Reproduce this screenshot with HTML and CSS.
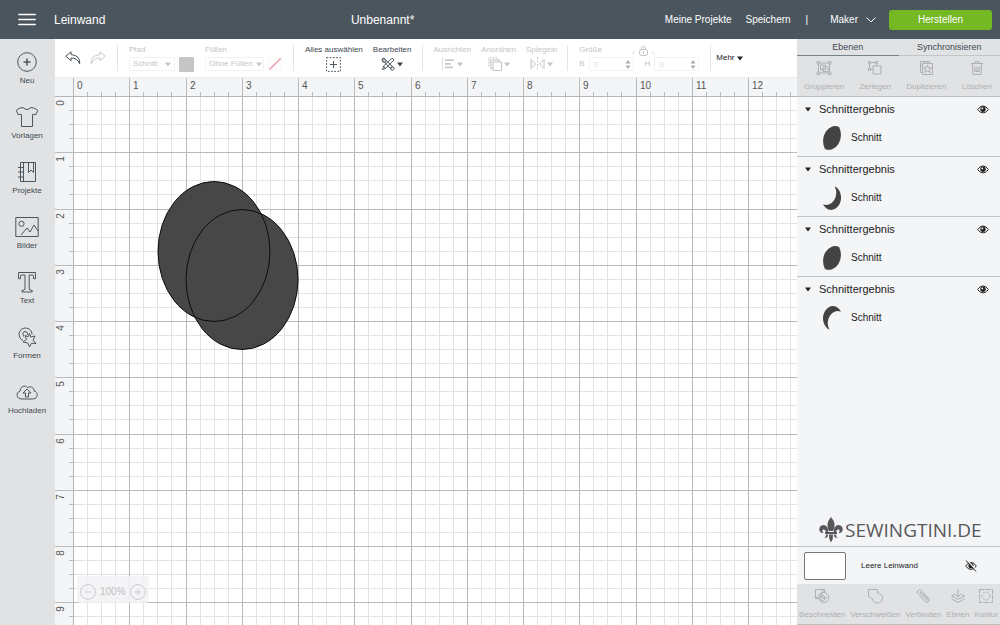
FILE: index.html
```html
<!DOCTYPE html>
<html lang="de">
<head>
<meta charset="utf-8">
<meta name="viewport" content="width=device-width, initial-scale=1">
<title>Leinwand</title>
<link rel="stylesheet" href="styles.css">
</head>
<body>
<svg class="defs" aria-hidden="true">
  <defs>
    <symbol id="eye" viewBox="0 0 12 9"><path d="M.6 4.500Q6-2.600 11.400 4.500Q6 11.400.6 4.500Z" fill="#fff" stroke="#222" stroke-width="1"/><circle cx="6" cy="4.200" r="2.700" fill="#222"/><circle cx="5.300" cy="3.400" r=".9" fill="#fff"/></symbol>
    <symbol id="caret" viewBox="0 0 6 5"><path d="M0 .5h6L3 4.500z" fill="currentColor"/></symbol>
    <symbol id="spin" viewBox="0 0 6 11"><path d="M.5 4.500h5L3 1zM.5 6.500h5L3 10z" fill="#aaa"/></symbol>
  </defs>
</svg>

<header class="header">
  <button class="burger" aria-label="Menü"><svg width="18" height="13" viewBox="0 0 18 13" stroke="#fff" stroke-width="1.500" stroke-linecap="round"><path d="M.8 1.500h16.400M.8 6.500h16.400M.8 11.500h16.400"/></svg></button>
  <span class="header-page">Leinwand</span>
  <h1 class="header-title">Unbenannt*</h1>
  <nav class="header-nav">
    <a class="nav-link" href="#">Meine Projekte</a>
    <a class="nav-link" href="#">Speichern</a>
    <span class="nav-divider">|</span>
    <button class="machine">Maker <svg width="10" height="6" viewBox="0 0 10 6" fill="none" stroke="#fff"><path d="M.5.5 5 5 9.500.5"/></svg></button>
    <button class="make">Herstellen</button>
  </nav>
</header>

<div class="workspace">
  <nav class="sidebar">
    <button class="side-item"><svg viewBox="0 0 24 24"><circle cx="12" cy="12" r="9.300"/><path d="M12 8.500v7M8.500 12h7" stroke-width="1.500"/></svg>Neu</button>
    <button class="side-item"><svg viewBox="0 0 24 24"><path d="M8 2.500Q12 6.500 16 2.500Q20.500 2.800 22.800 5.500L20.500 10Q18.800 8.700 17.500 9.500V21.500H6.500V9.500Q5.200 8.700 3.500 10L1.200 5.500Q3.500 2.800 8 2.500Z"/></svg>Vorlagen</button>
    <button class="side-item"><svg viewBox="0 0 24 24"><path d="M5.500 2.500h15v19h-15zM8.500 2.500v19M3 7.500h5M3 12h5M3 17h5M13.500 2.500v10l2.500-2.500 2.500 2.500v-10"/></svg>Projekte</button>
    <button class="side-item"><svg viewBox="0 0 24 24"><path d="M.8 2.500h22.400v19H.8zM6 20l6-7 3 4 4-7 4 6"/><circle cx="6.500" cy="8.800" r="2.600"/></svg>Bilder</button>
    <button class="side-item"><svg viewBox="0 0 24 24"><path d="M3.500 2.500h17v6.200h-2V5.800q0-.8-1-.8h-3.300v14q0 1.300 3 1.500v1.500H7v-1.500q3-.2 3-1.500V5H6.500q-1 0-1 .8v2.900h-2z"/></svg>Text</button>
    <button class="side-item"><svg viewBox="0 0 24 24"><path d="M8 15.500C2.500 13.500 2.500 3.500 10 3c4.500 0 7 3 7 6.500"/><path d="M8.500 11.500Q7 6.500 10 6.500Q13 6.800 13 10"/><path d="M14.500 8.500l1.200 3.500 4.300-1-2 4 3 3.500-4.500-.3-2 3.800-1.700-4-4.800-1 3.500-2.500-1.500-4 3.200 1.200z"/></svg>Formen</button>
    <button class="side-item"><svg viewBox="0 0 24 24"><path d="M7 19C1 19 .5 12.500 5.200 11C5 6.500 10 4.500 12.500 7.500C16.500 5.500 19.500 8.500 19 11C23.500 11.500 23.500 19 17.500 19Z"/><path d="M10.500 17v-4h-2.500L12 9l4 4h-2.500v4z"/></svg>Hochladen</button>
  </nav>

  <main class="editor">
    <div class="toolbar">
      <div class="history">
        <button aria-label="Rückgängig"><svg width="16" height="14" viewBox="0 0 16 14" fill="none" stroke="#444e56"><path d="M6 .8.8 5.200 6 9.700V7q6-.5 8.700 5.800Q15.500 4.500 6 3.500Z"/></svg></button>
        <button aria-label="Wiederherstellen"><svg width="16" height="14" viewBox="0 0 16 14" fill="none" stroke="#c5c7c9"><path d="M10 .8 15.200 5.200 10 9.700V7Q4 6.500 1.300 12.800.500 4.500 10 3.500Z"/></svg></button>
      </div>
      <div class="tool off">
        <label for="path">Pfad</label>
        <div class="row"><span class="pick path-pick"><select id="path"><option>Schnitt</option></select><svg class="caret"><use href="#caret"/></svg></span><button class="swatch" aria-label="Farbe"></button></div>
      </div>
      <div class="tool off plain">
        <label for="fill">Füllen</label>
        <div class="row"><span class="pick fill-pick"><select id="fill"><option>Ohne Füllen</option></select><svg class="caret"><use href="#caret"/></svg></span><button class="nofill" aria-label="Keine Füllfarbe"><svg viewBox="0 0 12 12"><path d="M.5 11.500 11.500.5" stroke="#eeabb5" stroke-width="1.800"/></svg></button></div>
      </div>
      <button class="tool center">
        <span>Alles auswählen</span>
        <span class="row"><svg width="15" height="15" viewBox="0 0 15 15" fill="none" stroke="#4b555d"><rect x=".6" y=".6" width="13.800" height="13.800" stroke-dasharray="1.700 1.500"/><path d="M7.500 4v7M4 7.500h7"/></svg></span>
      </button>
      <button class="tool center plain">
        <span>Bearbeiten</span>
        <span class="row tight"><svg width="14" height="14" viewBox="0 0 14 14" fill="none" stroke="#3d474f" stroke-width=".9"><path d="M1 2.500 2.500 1l9 8.500q-.5 1.500-2 2zM1.500 12.500l1-3.500 8-7.500q2-.5 2.500 1.500L4.500 11.500zM2.500 9l2 2.500"/><circle cx="11.300" cy="11.500" r="1.700"/><circle cx="3" cy="3.500" r="1.800"/></svg><svg class="caret"><use href="#caret"/></svg></span>
      </button>
      <button class="tool center off">
        <span>Ausrichten</span>
        <span class="row tight"><svg width="14" height="14" viewBox="0 0 14 14" fill="none" stroke="#c7c9cb"><path d="M1.500 1v12" stroke-dasharray="1.500 1"/><path d="M4 3.200h9M4 6.800h6M4 10.400h8" stroke-width="1.800"/></svg><svg class="caret"><use href="#caret"/></svg></span>
      </button>
      <button class="tool center off plain">
        <span>Anordnen</span>
        <span class="row tight"><svg width="14" height="14" viewBox="0 0 14 14" fill="none" stroke="#c0c2c4"><path d="M1 9.500V.8h8.500v2" stroke-dasharray="2 1"/><path d="M5 11.500H2.800V3h8.500v2"/><path d="M5 5h8.500v8.500H5z"/></svg><svg class="caret"><use href="#caret"/></svg></span>
      </button>
      <button class="tool center off plain">
        <span>Spiegeln</span>
        <span class="row tight"><svg width="15" height="14" viewBox="0 0 15 14" fill="none" stroke="#c0c2c4"><path d="M1 2.500 5.500 7 1 11.500zM14 2.500 9.500 7 14 11.500z"/><path d="M7.500 0v14" stroke-dasharray="2 1.500"/></svg><svg class="caret"><use href="#caret"/></svg></span>
      </button>
      <div class="tool off size">
        <span class="size-head">Größe <svg width="23" height="12" viewBox="0 0 23 12" fill="none" stroke="#c0c2c4"><path d="M1 11V8h3M22 11V8h-3" stroke="#e8e8e8"/><rect x="7.500" y="5.500" width="8" height="6" rx="2"/><path d="M9.500 5.500V4q2-4 4 0v1.500M11.500 7v3"/></svg></span>
        <div class="row">
          <label for="w">B</label><span class="num"><input id="w" type="number" value="0"><svg width="6" height="11"><use href="#spin"/></svg></span>
          <label for="h" class="h-label">H</label><span class="num"><input id="h" type="number" value="0"><svg width="6" height="11"><use href="#spin"/></svg></span>
        </div>
      </div>
      <button class="more">Mehr <svg class="caret"><use href="#caret"/></svg></button>
    </div>

    <div class="canvas">
      <svg class="board" width="100%" height="100%">
        <defs>
          <pattern id="grid" x="18" y="18" width="225" height="225" patternUnits="userSpaceOnUse">
            <path class="minor" d="M14.500 0V225M28.500 0V225M42.500 0V225M70.500 0V225M84.500 0V225M98.500 0V225M127.500 0V225M141.500 0V225M155.500 0V225M183.500 0V225M197.500 0V225M211.500 0V225M0 14.500H225M0 28.500H225M0 42.500H225M0 70.500H225M0 84.500H225M0 98.500H225M0 127.500H225M0 141.500H225M0 155.500H225M0 183.500H225M0 197.500H225M0 211.500H225"/>
            <path class="major" d="M.5 0V225M56.500 0V225M113.500 0V225M169.500 0V225M0 .5H225M0 56.500H225M0 113.500H225M0 169.500H225"/>
          </pattern>
          <pattern id="ruler-x" x="18" y="0" width="225" height="18" patternUnits="userSpaceOnUse">
            <path class="major" d="M.5 0V18M56.500 0V18M113.500 0V18M169.500 0V18M14.500 14V18M28.500 14V18M42.500 14V18M70.500 14V18M84.500 14V18M98.500 14V18M127.500 14V18M141.500 14V18M155.500 14V18M183.500 14V18M197.500 14V18M211.500 14V18"/>
          </pattern>
          <pattern id="ruler-y" x="0" y="18" width="18" height="225" patternUnits="userSpaceOnUse">
            <path class="major" d="M0 .5H18M0 56.500H18M0 113.500H18M0 169.500H18M14 14.500H18M14 28.500H18M14 42.500H18M14 70.500H18M14 84.500H18M14 98.500H18M14 127.500H18M14 141.500H18M14 155.500H18M14 183.500H18M14 197.500H18M14 211.500H18"/>
          </pattern>
        </defs>
        <rect width="100%" height="100%" fill="#fff"/>
        <rect x="18" y="18" width="100%" height="100%" fill="url(#grid)"/>
        <rect width="100%" height="18" fill="#f4f5f7"/>
        <rect width="18" height="100%" fill="#f4f5f7"/>
        <rect x="18" width="100%" height="18" fill="url(#ruler-x)"/>
        <rect y="18" width="18" height="100%" fill="url(#ruler-y)"/>
        <rect y="18" width="100%" height="1" fill="#b4b5b7"/>
        <rect x="18" width="1" height="100%" fill="#b4b5b7"/>
        <g class="ruler-text">
          <text x="22" y="11">0</text><text x="78" y="11">1</text><text x="135" y="11">2</text><text x="191" y="11">3</text><text x="247" y="11">4</text><text x="303" y="11">5</text><text x="360" y="11">6</text><text x="416" y="11">7</text><text x="472" y="11">8</text><text x="528" y="11">9</text><text x="585" y="11">10</text><text x="641" y="11">11</text><text x="697" y="11">12</text>
        </g>
        <g class="ruler-text upright" transform="rotate(-90)">
          <text x="-25" y="9">0</text><text x="-81" y="9">1</text><text x="-138" y="9">2</text><text x="-194" y="9">3</text><text x="-250" y="9">4</text><text x="-306" y="9">5</text><text x="-363" y="9">6</text><text x="-419" y="9">7</text><text x="-475" y="9">8</text><text x="-531" y="9">9</text>
        </g>
        <g fill="#474747">
          <ellipse cx="159" cy="173.500" rx="56" ry="70"/>
          <ellipse cx="187" cy="201.500" rx="56" ry="70"/>
        </g>
        <g fill="none" stroke="#0c0c0c">
          <ellipse cx="159" cy="173.500" rx="56" ry="70"/>
          <ellipse cx="187" cy="201.500" rx="56" ry="70"/>
        </g>
      </svg>
      <div class="zoom">
        <button aria-label="Verkleinern"><svg width="16" height="16" viewBox="0 0 16 16" fill="none" stroke="#c9cacc"><circle cx="8" cy="8" r="7.400"/><path d="M5 8h6"/></svg></button>
        <span>100%</span>
        <button aria-label="Vergrößern"><svg width="16" height="16" viewBox="0 0 16 16" fill="none" stroke="#c9cacc"><circle cx="8" cy="8" r="7.400"/><path d="M5 8h6M8 5v6"/></svg></button>
      </div>
    </div>
  </main>

  <aside class="panel">
    <div class="tabs" role="tablist">
      <button class="tab active" role="tab" aria-selected="true">Ebenen</button>
      <button class="tab" role="tab" aria-selected="false">Synchronisieren</button>
    </div>
    <div class="actions top">
      <button><svg viewBox="0 0 16 16"><path d="M2.500 3h11v10h-11zM4.500 5h5v4.500h-5zM7 7h5v4.500H7z"/><path d="M1 1.500h2.500V4H1zM12.500 1.500H15V4h-2.500zM1 12h2.500v2.500H1zM12.500 12H15v2.500h-2.500z" fill="#e1e2e4"/></svg>Gruppieren</button>
      <button><svg viewBox="0 0 16 16"><path d="M2.500 2.500h7v7h-7z"/><path d="M6 6h8v8H6z" fill="#e1e2e4"/><path d="M1.500 1.500h2v2h-2zM8.500 1.500h2v2h-2zM1.500 8.500h2v2h-2z" fill="#e1e2e4"/></svg>Zerlegen</button>
      <button><svg viewBox="0 0 16 16"><path d="M4.500 12.500h-2v-11h9v2M4.500 3.500h10v11h-10zM9.500 5l1 2.800h3L11.200 9.500l1 3-2.700-1.700-2.700 1.700 1-3L5.500 7.800h3zM2 4l2 2M5 1.500l2 2M8 1.500l2 2"/></svg>Duplizieren</button>
      <button><svg viewBox="0 0 16 16"><path d="M2 3.500h12M6 3.500v-2h4v2M3.500 3.500l.5 11h8l.5-11M5.800 6.500v5h4.400v-5M8 6.500v5"/></svg>Löschen</button>
    </div>
    <ul class="layers">
      <li class="layer">
        <div class="layer-head"><button class="fold" aria-label="Einklappen"><svg class="caret"><use href="#caret"/></svg></button><span>Schnittergebnis</span><button class="see" aria-label="Sichtbar"><svg width="12" height="9"><use href="#eye"/></svg></button></div>
        <div class="layer-body"><svg width="18" height="24" viewBox="186 209 84 113" fill="#434343"><path d="M261.300 213.800A56 70 0 0 0 194.700 317A56 70 0 0 0 261.300 213.800Z"/></svg><span>Schnitt</span></div>
      </li>
      <li class="layer">
        <div class="layer-head"><button class="fold" aria-label="Einklappen"><svg class="caret"><use href="#caret"/></svg></button><span>Schnittergebnis</span><button class="see" aria-label="Sichtbar"><svg width="12" height="9"><use href="#eye"/></svg></button></div>
        <div class="layer-body"><svg width="18" height="24" viewBox="195 213 103 137" fill="#434343"><path d="M261.300 213.800A56 70 0 1 1 194.700 317A56 70 0 0 0 261.300 213.800Z"/></svg><span>Schnitt</span></div>
      </li>
      <li class="layer">
        <div class="layer-head"><button class="fold" aria-label="Einklappen"><svg class="caret"><use href="#caret"/></svg></button><span>Schnittergebnis</span><button class="see" aria-label="Sichtbar"><svg width="12" height="9"><use href="#eye"/></svg></button></div>
        <div class="layer-body"><svg width="18" height="24" viewBox="186 209 84 113" fill="#434343"><path d="M261.300 213.800A56 70 0 0 0 194.700 317A56 70 0 0 0 261.300 213.800Z"/></svg><span>Schnitt</span></div>
      </li>
      <li class="layer">
        <div class="layer-head"><button class="fold" aria-label="Einklappen"><svg class="caret"><use href="#caret"/></svg></button><span>Schnittergebnis</span><button class="see" aria-label="Sichtbar"><svg width="12" height="9"><use href="#eye"/></svg></button></div>
        <div class="layer-body"><svg width="18" height="24" viewBox="158 181 103 137" fill="#434343"><path d="M194.700 317A56 70 0 1 1 261.300 213.800A56 70 0 0 0 194.700 317Z"/></svg><span>Schnitt</span></div>
      </li>
    </ul>
    <div class="brand">
      <svg width="24" height="26" viewBox="0 0 24 26" fill="#58585a"><path d="M12 0Q18 7 14 14H10Q6 7 12 0Z"/><path d="M9.500 15.500Q9 8 4.500 8Q0 8.500.3 13Q1 16.500 4.500 16Q2.500 14 4 12.500Q6.500 12 7 15.500ZM14.500 15.500Q15 8 19.500 8Q24 8.500 23.700 13Q23 16.500 19.500 16Q21.500 14 20 12.500Q17.500 12 17 15.500Z"/><path d="M6 15h12v2H6zM10 17.500h4Q14.500 22 12 25.500Q9.500 22 10 17.500ZM9 17.500Q9 21.500 5.500 20.500Q7.500 19.500 7 17.500ZM15 17.500Q15 21.500 18.500 20.500Q16.500 19.500 17 17.500Z"/></svg>
      <span>SEWINGTINI.DE</span>
    </div>
    <div class="blank">
      <button class="blank-swatch" aria-label="Leinwandfarbe"></button>
      <span>Leere Leinwand</span>
      <button class="see" aria-label="Ausgeblendet"><svg width="12" height="12" viewBox="0 0 12 12"><g transform="translate(0 1.500)"><path d="M.6 4.500Q6-2.600 11.400 4.500Q6 11.400.6 4.500Z" fill="none" stroke="#222"/><circle cx="6" cy="4.200" r="2.600" fill="#222"/></g><path d="M2 0 12 11" stroke="#f4f5f7" stroke-width="1.200"/><path d="M1 .5 11 11.500" stroke="#222"/></svg></button>
    </div>
    <div class="actions bottom">
      <button><svg viewBox="0 0 16 16"><path d="M5 10.500H1.500v-9h9V4M4 10.500 1.500 8M10.500 1.500 4 8"/><circle cx="9.800" cy="9.500" r="5"/><circle cx="8.500" cy="10" r="2.500"/><path d="M8 5v5h5"/></svg>Beschneiden</button>
      <button><svg viewBox="0 0 16 16"><path d="M1.500 1.500h9V5A5 5 0 1 1 5.500 10.500H4L1.500 8Z"/></svg>Verschweißen</button>
      <button><svg viewBox="0 0 16 16"><path d="M4 6.500l6 7q2.500 2 4-.5.500-1.500-.5-2.500L6.500 2.500q-2-1.500-3.500 0-1.500 1.500 0 3.500M5.500 5.500l6 6.500q1 .5 1.500-.5L7 4.500q-1-1-2 0-.5.500.5 1.500"/></svg>Verbinden</button>
      <button><svg viewBox="0 0 16 16"><path d="M5.500 6 1.500 8 8 11.500 14.500 8l-4-2M1.500 11 8 14.500 14.500 11M8 1v8M5.500 6.500 8 9l2.500-2.500"/></svg>Ebnen</button>
      <button><svg viewBox="0 0 16 16"><path d="M1.500 1.500h13v13h-13z" stroke-dasharray="5 1"/><circle cx="8" cy="8" r="4" stroke-dasharray="2.200 1.600"/></svg>Kontur</button>
    </div>
  </aside>
</div>
</body>
</html>
```
FILE: styles.css
```css
* { box-sizing: border-box; }
body {
  margin: 0;
  height: 100vh;
  display: flex;
  flex-direction: column;
  font: 8px/10px "Liberation Sans", Arial, sans-serif;
  color: #3d474f;
  overflow: hidden;
}
button, input, select { font: inherit; color: inherit; background: none; border: 0; padding: 0; margin: 0; }
button { cursor: pointer; }
svg { display: block; flex: none; }
.defs { position: absolute; width: 0; height: 0; }
.caret { width: 6px; height: 5px; }

.header {
  display: grid;
  grid-template-columns: 54px auto 1fr auto;
  align-items: center;
  height: 39px;
  flex: none;
  padding-right: 8px;
  background: #4b555d;
  color: #fff;
}
.burger { justify-self: center; }
.header-page { font-size: 12px; line-height: 16px; }
.header-title { margin: 0; padding-right: 5px; font-size: 12px; line-height: 16px; font-weight: 400; text-align: center; }
.header-nav { display: flex; align-items: center; font-size: 10px; line-height: 12px; }
.nav-link { color: #fff; text-decoration: none; margin-right: 14px; }
.nav-divider { margin: 0 22px 0 1px; }
.machine { display: flex; align-items: center; gap: 8px; margin-right: 13px; }
.make { width: 103px; height: 20px; border-radius: 3px; background: #74b824; }

.workspace { flex: 1; min-height: 0; display: grid; grid-template-columns: 55px minmax(0, 1fr) 203px; }

.sidebar { display: flex; flex-direction: column; gap: 16px; padding: 11px 1px 0 0; background: #e1e2e4; }
.side-item { display: flex; flex-direction: column; align-items: center; gap: 2px; height: 39px; }
.side-item svg { width: 24px; height: 24px; fill: none; stroke: #4b565f; stroke-width: 1; }

.editor { display: flex; flex-direction: column; min-width: 0; }
.toolbar { display: flex; height: 39px; flex: none; padding: 6px 0 6px 10px; border-bottom: 1px solid #ececee; background: #fff; }
.history { display: flex; align-items: center; gap: 9px; padding-right: 11px; }
.tool { display: flex; flex-direction: column; justify-content: flex-start; align-items: flex-start; height: 26px; padding: 0 11px; border-left: 1px solid #e4e4e6; white-space: nowrap; }
.tool.plain { padding-left: 0; border-left: 0; }
.tool.center { align-items: center; padding-right: 10px; }
.off { color: #c3c5c7; }
.row { display: flex; align-items: center; height: 18px; flex: none; gap: 4px; }
.tight { gap: 2px; }
.pick { display: flex; align-items: center; height: 14px; border: 1px solid #f2f2f3; border-radius: 1px; }
.pick select { flex: 1; min-width: 0; height: 12px; padding-left: 3px; appearance: none; }
.path-pick { width: 46px; padding-right: 3px; }
.fill-pick { width: 59px; padding-right: 1px; }
.swatch { width: 15px; height: 15px; border-radius: 1px; background: #c5c5c5; }
.nofill { border: 1px solid #f6f6f6; }
.nofill svg { width: 12px; height: 12px; }
.size-head { display: flex; align-items: center; gap: 30px; height: 10px; }
.size .row { gap: 4px; }
.num { display: flex; align-items: center; width: 45px; height: 14px; padding-right: 2px; border: 1px solid #f2f2f3; border-radius: 1px; }
.num input { flex: 1; width: 10px; min-width: 0; height: 12px; padding-left: 4px; appearance: textfield; color: #dcdddf; }
.num input::-webkit-inner-spin-button { appearance: none; }
.h-label { margin-left: 7px; }
.more { display: flex; align-items: center; gap: 2px; padding-left: 5px; border-left: 1px solid #e4e4e6; color: #222; }

.canvas { position: relative; flex: 1; min-height: 0; }
.board { position: absolute; inset: 0; }
.minor { stroke: #e3e3e4; }
.major { stroke: #b9babb; }
.ruler-text { font-size: 10px; fill: #555; }
.upright { text-anchor: middle; }
.zoom {
  position: absolute;
  left: 22px;
  bottom: 22px;
  display: flex;
  align-items: center;
  gap: 4px;
  padding: 8px 3px 3px;
  border-radius: 3px;
  background: rgba(242, 242, 244, .85);
  color: #bfc0c2;
  font-size: 10px;
}

.panel { display: flex; flex-direction: column; min-width: 0; background: #f4f5f7; }
.tabs { display: grid; grid-template-columns: 1fr 1fr; height: 17px; flex: none; background: #e1e2e4; }
.tab { font-size: 9px; border-bottom: 1px solid #c3c5c7; }
.tab.active { border-color: #75818b; }
.actions { display: flex; justify-content: space-between; flex: none; height: 41px; background: #e1e2e4; color: #adafb1; }
.actions button { display: flex; flex-direction: column; align-items: center; gap: 6px; }
.actions svg { width: 16px; height: 16px; fill: none; stroke: #adafb1; stroke-width: 1; }
.top { padding: 4px 8px 0 7px; border-bottom: 1px solid #bcbdbf; }
.bottom { padding: 4px 2px 0; border-bottom: 1px solid #bcbdbf; }
.layers { flex: 1; margin: 0; padding: 0; list-style: none; color: #222; }
.layer { height: 60px; padding: 5px 11px 0 8px; border-bottom: 1px solid #c3c4c6; }
.layer:last-child { border-bottom: 0; }
.layer-head { display: flex; align-items: center; gap: 8px; font-size: 11px; line-height: 14px; }
.see { margin-left: auto; }
.layer-body { display: flex; align-items: center; gap: 10px; padding: 10px 0 0 18px; font-size: 10px; }
.brand { display: flex; align-items: center; gap: 2px; padding: 0 0 3px 22px; color: #58585a; font: 19px/26px "Open Sans", sans-serif; }
.blank { display: flex; align-items: center; height: 38px; flex: none; padding: 0 23px 0 7px; border-top: 1px solid #c3c4c6; color: #222; }
.blank-swatch { width: 42px; height: 28px; margin-right: 15px; border: 1px solid #777; border-radius: 2px; background: #fff; }
```
